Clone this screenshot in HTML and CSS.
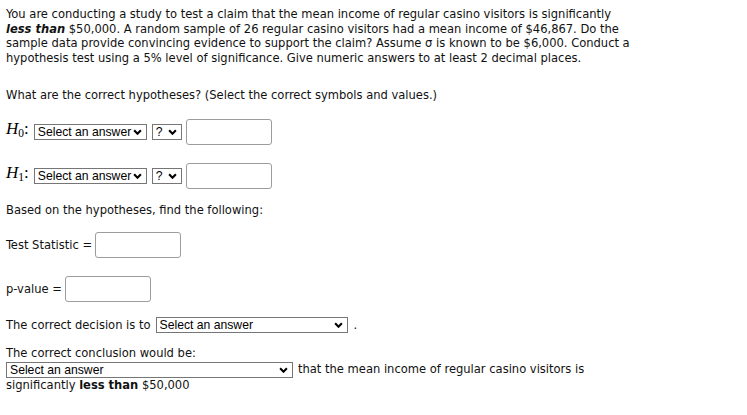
FILE: index.html
```html
<!DOCTYPE html>
<html lang="en">
<head>
<meta charset="utf-8">
<title>Hypothesis test question</title>
<link rel="stylesheet" href="styles.css">
</head>
<body>
<div class="page">
  <p class="para">You are conducting a study to test a claim that the mean income of regular casino visitors is significantly<br><b><i>less than</i></b> $50,000. A random sample of 26 regular casino visitors had a mean income of $46,867. Do the<br>sample data provide convincing evidence to support the claim? Assume σ is known to be $6,000. Conduct a<br>hypothesis test using a 5% level of significance. Give numeric answers to at least 2 decimal places.</p>

  <p class="line q2">What are the correct hypotheses? (Select the correct symbols and values.)</p>

  <div class="row h0">
    <span class="hyp"><i>H</i><sub>0</sub>:</span>
    <span class="sel w-param"><select><option>Select an answer</option></select><svg class="chev" viewBox="0 0 8 5"><path d="M1 1l3 3 3-3"/></svg></span>
    <span class="sel w-sym"><select><option>?</option></select><svg class="chev" viewBox="0 0 8 5"><path d="M1 1l3 3 3-3"/></svg></span>
    <input class="box" type="text">
  </div>

  <div class="row h1">
    <span class="hyp"><i>H</i><sub>1</sub>:</span>
    <span class="sel w-param"><select><option>Select an answer</option></select><svg class="chev" viewBox="0 0 8 5"><path d="M1 1l3 3 3-3"/></svg></span>
    <span class="sel w-sym"><select><option>?</option></select><svg class="chev" viewBox="0 0 8 5"><path d="M1 1l3 3 3-3"/></svg></span>
    <input class="box" type="text">
  </div>

  <p class="line based">Based on the hypotheses, find the following:</p>

  <div class="row ts">
    <span>Test Statistic =</span>
    <input class="box" type="text">
  </div>

  <div class="row pv">
    <span>p-value =</span>
    <input class="box" type="text">
  </div>

  <div class="row dec">
    <span>The correct decision is to</span>
    <span class="sel w-dec"><select><option>Select an answer</option></select><svg class="chev" viewBox="0 0 8 5"><path d="M1 1l3 3 3-3"/></svg></span>
    <span class="dot">.</span>
  </div>

  <p class="line concl">The correct conclusion would be:</p>
  <div class="row cl">
    <span class="sel w-con"><select><option>Select an answer</option></select><svg class="chev" viewBox="0 0 8 5"><path d="M1 1l3 3 3-3"/></svg></span>
    <span>that the mean income of regular casino visitors is</span>
  </div>
  <p class="line last">significantly <b>less than</b> $50,000</p>
</div>
</body>
</html>
```

FILE: styles.css
```css
html, body {
  margin: 0;
  background: #fff;
}

.page {
  padding: 7px 6px 0 6px;
  font-family: "DejaVu Sans Condensed", "DejaVu Sans", sans-serif;
  font-size: 12.8px;
  line-height: 14.7px;
  color: #111;
}

p {
  margin: 0;
}

.para {
  white-space: nowrap;
}

.q2 { margin-top: 22px; }

.row {
  display: flex;
  align-items: center;
  gap: 4px;
}

.h0 { margin-top: 16px; height: 26px; }
.h1 { margin-top: 18px; height: 26px; }
.based { margin-top: 14.5px; }
.ts { margin-top: 14.7px; height: 26px; gap: 3px; }
.pv { margin-top: 18px; height: 26px; gap: 3px; }
.dec { margin-top: 15px; height: 16px; }
.concl { margin-top: 12.5px; }
.cl { margin-top: 1px; height: 16px; gap: 5px; }

.hyp {
  font-family: "Liberation Serif", "DejaVu Serif", serif;
  font-size: 17px;
  margin-right: 1px;
  color: #000;
}
.hyp sub {
  font-style: normal;
  font-size: 11.5px;
  vertical-align: -3px;
}

.sel {
  position: relative;
  display: inline-block;
  height: 16px;
}

.sel select {
  appearance: none;
  -webkit-appearance: none;
  box-sizing: border-box;
  height: 16px;
  margin: 0;
  padding: 0 0 0 3px;
  border: 1px solid #767676;
  border-radius: 0;
  background: #fff;
  color: #000;
  font-family: "Liberation Sans", Arial, sans-serif;
  font-size: 12.2px;
  line-height: 14px;
}

.chev {
  position: absolute;
  right: 5px;
  top: 5px;
  width: 9px;
  height: 6px;
  pointer-events: none;
}
.chev path {
  fill: none;
  stroke: #000;
  stroke-width: 1.9;
}

.w-param select { width: 113px; }
.w-sym { margin-left: 1px; }
.w-sym select { width: 30px; }
.w-dec select { width: 192px; }
.w-con select { width: 287px; }

.w-dec { margin-left: 1px; }
.dot { margin-left: 2px; }

.box {
  box-sizing: border-box;
  width: 86px;
  height: 26px;
  margin: 0;
  border: 1px solid #9c9c9c;
  border-radius: 3px;
  background: #fff;
}
```
